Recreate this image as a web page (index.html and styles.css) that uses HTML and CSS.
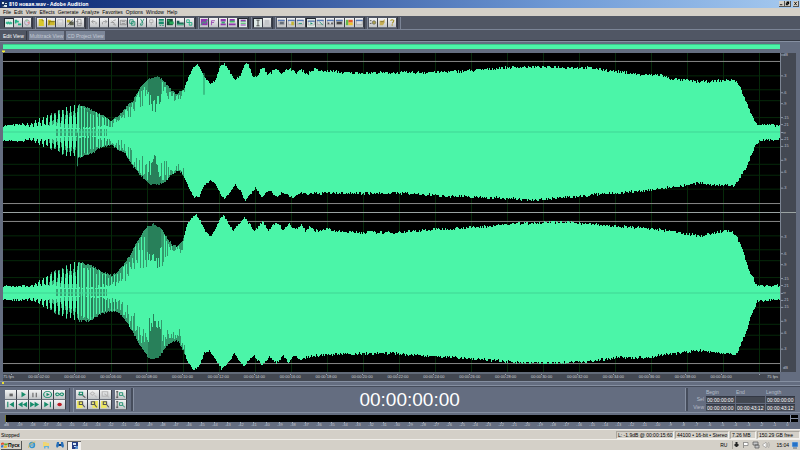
FILE: index.html
```
<!DOCTYPE html>
<html lang="en">
<head>
<meta charset="utf-8">
<title>810 новая.wav - Adobe Audition</title>
<link rel="stylesheet" href="styles.css">
</head>
<body>
<header class="titlebar">
  <svg class="app-icon" viewBox="0 0 7 7"><rect width="7" height="7" fill="#16315f"/><path d="M1 1h2v2H1zM4 2h2v1H4zM1 5h2V4h3v2H4" fill="#d6e4ea"/></svg>
  <h1>810 новая.wav - Adobe Audition</h1>
  <div class="window-buttons">
    <button aria-label="Minimize"><svg viewBox="0 0 6 6"><path d="M1 4h3v1H1z"/></svg></button>
    <button aria-label="Restore"><svg viewBox="0 0 6 6"><path d="M2 .5h3v3H4v1.500H1V2h1zM2 3v1h1V3z" fill-rule="evenodd"/></svg></button>
    <button class="close" aria-label="Close"><svg viewBox="0 0 6 6"><path d="M1.500 1l3 4M4.500 1l-3 4" stroke="#000"/></svg></button>
  </div>
</header>
<nav class="menu">
  <button>File</button><button>Edit</button><button>View</button><button>Effects</button><button>Generate</button><button>Analyze</button><button>Favorites</button><button>Options</button><button>Window</button><button>Help</button>
</nav>
<div class="toolbar" id="toolbar"></div>
<div class="tabs">
  <button class="tab active">Edit View</button><button class="tab">Multitrack View</button><button class="tab">CD Project View</button>
</div>
<main class="editor">
  <div class="overview"></div>
  <svg class="cue" viewBox="0 0 4 3"><path d="M0 0h4v1L2 3 0 1z" fill="#f4ec30"/></svg>
  <svg class="wave" id="wave" viewBox="0 0 777 321" preserveAspectRatio="none"></svg>
  <svg class="levels" id="levels"></svg>
  <div class="timeline" id="timeline"></div>
  <div class="scrollstrip"><i></i></div>
</main>
<section class="controls">
  <div class="pad transport" id="transport"></div>
  <div class="pad zoomer" id="zoomer"></div>
  <div class="pad vzoom" id="vzoom"></div>
  <output class="clock">00:00:00:00</output>
  <table class="selection">
    <tr><td></td><th>Begin</th><th>End</th><th>Length</th></tr>
    <tr><th>Sel</th><td><input aria-label="Selection begin" value="00:00:00:00"></td><td><input aria-label="Selection end" value=""></td><td><input aria-label="Selection length" value="00:00:00:00"></td></tr>
    <tr><th>View</th><td><input aria-label="View begin" value="00:00:00:00"></td><td><input aria-label="View end" value="00:00:43:12"></td><td><input aria-label="View length" value="00:00:43:12"></td></tr>
  </table>
</section>
<section class="meter">
  <div class="meter-bar"><i></i></div>
  <div class="meter-scale" id="meter"></div>
</section>
<footer class="status">
  <span class="state">Stopped</span><span class="cell peak">L: -1.9dB @ 00:00:15:60</span><span class="cell format">44100 • 16-bit • Stereo</span><span class="cell size">7.26 MB</span><span class="cell free">150.29 GB free</span>
</footer>
<div class="taskbar">
  <button class="start"><svg viewBox="0 0 8 8"><path d="M0 2q2-1.500 3.500-.4L3 4Q1.500 3 0 4z" fill="#e2502e"/><path d="M4 1.800q2 1.200 4-.1L7.300 4Q5.500 5 3.600 4z" fill="#5ba83c"/><path d="M0 4.600q1.500-1 3-.1L2.500 7Q1 6 0 7z" fill="#3a76c8"/><path d="M3.500 4.700Q5.500 5.700 7.200 4.600L6.600 7Q5 8 3 7z" fill="#f0bd30"/></svg>Пуск</button>
  <button class="task" aria-label="Internet Explorer"><svg viewBox="0 0 8 8"><circle cx="4" cy="4" r="2.500" fill="none" stroke="#3193cf" stroke-width="1.400"/><path d="M2 4h4.500" stroke="#3193cf"/><path d="M.4 6.800Q1 2 7.400.8" fill="none" stroke="#d9b74a" stroke-width=".8"/></svg></button>
  <button class="task" aria-label="Explorer"><svg viewBox="0 0 8 8"><path d="M1 1h3l1 1h2v4H1z" fill="#f0d674"/><path d="M2 5h5v2.500H5.500V6h-2v1.500H2z" fill="#66b1dc"/></svg></button>
  <button class="task" aria-label="Messenger"><svg viewBox="0 0 8 8"><path d="M1 1h2v2h2V1h2l1 4-1 2-2-2H3L1 7 0 5z" fill="#276fb9"/><path d="M3 3h2v2H3z" fill="#173b6c"/></svg></button>
  <button class="task pressed" aria-label="Adobe Audition"><svg viewBox="0 0 8 8"><path d="M1 0h6v7H1z" fill="#243d84"/><path d="M2 1h3v2H2zM3 4h3v1H3z" fill="#d6e7f7"/><path d="M5 4h2v3H4z" fill="#5890cf"/></svg></button>
  <div class="tray">
    <span class="lang">RU</span>
    <svg class="person" viewBox="0 0 6 8"><path d="M2 1h2v2h1v2H1V3h1zM2 5h2v1H2z" fill="#252525"/></svg>
    <svg viewBox="0 0 8 8"><path d="M1.500 1v6M2 1.500h4v3H2" fill="#fff" stroke="#777" stroke-width=".7"/></svg>
    <svg viewBox="0 0 8 8"><path d="M1 1h5v3H1zM3 4h4v3H3z" fill="#c4c5c7" stroke="#555" stroke-width=".7"/></svg>
    <svg viewBox="0 0 8 8"><path d="M1 3h1l2-2v6L2 5H1z" fill="#fff" stroke="#888" stroke-width=".5"/><path d="M5 2q2 2 0 4M6.500 1q2 3 0 6" fill="none" stroke="#999" stroke-width=".6"/></svg>
    <time>15:04</time>
    <svg viewBox="0 0 8 8"><path d="M1 1h6v5H1z" fill="#2472c8" stroke="#b8d6ee" stroke-width=".5"/><path d="M2 7h4" stroke="#345" stroke-width=".7"/></svg>
  </div>
</div>
<script src="app.js"></script>
</body>
</html>
```
FILE: styles.css
```
* { box-sizing: border-box; }
html, body { height: 100%; }
body {
  margin: 0;
  display: flex;
  flex-direction: column;
  overflow: hidden;
  background: #646d80;
  color: #000;
  font: 5px/6px "Liberation Sans", sans-serif;
}
button, input { font: inherit; color: inherit; margin: 0; padding: 0; border: 0; background: none; }
svg { display: block; }

.titlebar {
  flex: 0 0 8px;
  display: flex;
  align-items: center;
  gap: 1px;
  padding: 0 1px;
  background: linear-gradient(90deg, #0b2973, #2b4b94 30%, #6f9ad6 70%, #a6caf0);
  color: #fff;
}
.app-icon { width: 7px; height: 7px; }
.titlebar h1 { margin: 0; font: bold 5px/7px "Noto Sans", sans-serif; }
.window-buttons { margin-left: auto; display: flex; }
.window-buttons button { width: 6px; height: 6px; background: #d4d0c8; border-right: 1px solid #555; border-bottom: 1px solid #555; }
.window-buttons .close { margin-left: 2px; }
.window-buttons svg { width: 5px; height: 5px; }

.menu { flex: 0 0 8px; display: flex; gap: 3px; padding: 0 3px; background: #d4d0c8; }
.menu button { line-height: 8px; }

.toolbar {
  flex: 0 0 14px;
  display: flex;
  align-items: center;
  gap: 5px;
  padding-left: 4px;
  background: #505664;
  border-bottom: 1px solid #7b8496;
}
.group { position: relative; display: flex; height: 10px; }
.group::after { content: ""; position: absolute; right: -4px; top: -1px; bottom: -1px; width: 2px; border-left: 1px solid #333844; border-right: 1px solid #7b8496; }
.g2 { width: 19px; } .g3 { width: 28px; } .g5 { width: 48px; } .g9 { width: 87px; } .g11 { width: 105px; }
.tool {
  flex: 1;
  min-width: 0;
  background: linear-gradient(#f2f3f3, #c2c5c8);
  border-right: 1px solid #3c404a;
  border-bottom: 1px solid #6c727c;
}
.tool svg { width: 100%; height: 100%; }
.tool.on { background: #dfeae7; border-top: 1px solid #22262e; border-left: 1px solid #22262e; }

.tabs { flex: 0 0 10px; display: flex; gap: 2px; padding: 1px 1px 0; background: #505664; }
.tab { height: 9px; padding: 0 1px; background: #7c8698; color: #c4cad5; line-height: 8px; }
.tab.active { padding: 0 2px; background: #505664; color: #fff; border-right: 1px solid #343944; }

.editor {
  flex: 1;
  min-height: 0;
  display: grid;
  grid-template-columns: minmax(0, 1fr) 16px;
  grid-template-rows: 5px 4px minmax(0, 1fr) 9px 5px;
  padding: 3px 4px 0 3px;
  background: #646d80;
  border-top: 1px solid #343944;
  box-shadow: inset 0 1px #858fa1;
}
.overview { background: #4bf5a8; border-top: 1px solid #3bc98b; }
.cue { grid-column: 1; grid-row: 2; width: 3px; height: 3px; align-self: end; margin-left: -1px; }
.wave { grid-column: 1; grid-row: 3; width: 100%; height: 100%; background: #000; }
.levels { grid-column: 2; grid-row: 3; width: 100%; height: 100%; background: #434852; border-left: 1px solid #7c8593; }
.levels text { font-size: 4px; fill: #b9bec8; }
.timeline { grid-column: 1; grid-row: 4; display: flex; background: #434852; border-top: 2px solid #616a78; color: #d3d6da; font-size: 4px; line-height: 6px; white-space: nowrap; }
.timeline span { flex: 36 0 0; text-align: center; background: linear-gradient(#9aa2ae, #9aa2ae) center top / 1px 1px no-repeat; }
.timeline .first { flex: 18 0 0; text-align: left; }
.timeline .last { flex: 39 0 0; text-align: right; padding-right: 2px; }
.scrollstrip { grid-column: 1 / 3; border-bottom: 1px solid #858fa1; border-top: 1px solid #858fa1; margin: 0 -4px 0 -3px; }
.scrollstrip i { display: block; width: 2px; height: 2px; margin-left: 2px; background: #e9df31; }

.controls {
  flex: 0 0 26px;
  display: flex;
  align-items: center;
  padding: 0 4px 0 5px;
  background: #646d80;
  border-top: 1px solid #454c5b;
}
.pad { display: grid; grid-auto-rows: 10px; background: #3c404a; }
.transport { width: 61px; grid-template-columns: repeat(5, 1fr); }
.zoomer { width: 36px; grid-template-columns: repeat(3, 1fr); margin-left: 10px; position: relative; }
.zoomer::before { content: ""; position: absolute; left: -7px; top: -2px; bottom: -2px; width: 3px; border-left: 1px solid #464d5c; border-right: 1px solid #858fa1; }
.vzoom { width: 12px; margin-left: 3px; }
.clock {
  flex: 1;
  align-self: stretch;
  margin: 1px 4px 1px 4px;
  border-left: 2px solid #464d5c;
  border-right: 2px solid #464d5c;
  box-shadow: inset 1px 0 #858fa1, inset -1px 0 #858fa1;
  color: #fff;
  font-size: 19px;
  line-height: 23px;
  text-align: center;
}
.selection { border-spacing: 1px; color: #d8dbe0; line-height: 6px; }
.selection td, .selection th { padding: 0; font-weight: normal; text-align: left; height: 6px; }
.selection th:first-child { text-align: right; padding-right: 1px; }
.selection th { color: #b6bdc9; }
.selection input { display: block; width: 29px; height: 7px; padding-left: 1px; background: #434852; border-top: 1px solid #333844; color: #fff; line-height: 6px; }

.meter { flex: 0 0 17px; border-top: 1px solid #858fa1; background: #646d80; }
.meter-bar { display: flex; justify-content: flex-end; height: 7px; margin: 2px 2px 0 5px; background: #000; border-left: 1px solid #77762d; }
.meter-bar i { width: 8px; border-left: 1px solid #858fa1; background: linear-gradient(#858fa1, #858fa1) center / 100% 1px no-repeat; }
.meter-scale { display: flex; padding-right: 6px; color: #c3c8d0; font-size: 4px; line-height: 6px; }
.meter-scale span { flex: 1 0 0; text-align: center; background: linear-gradient(#aeb5c0, #aeb5c0) center top / 1px 1px no-repeat; }

.status { flex: 0 0 10px; display: flex; align-items: center; gap: 1px; background: #d4d0c8; border-top: 1px solid #f4f2ee; white-space: nowrap; }
.state { flex: 1; padding-left: 1px; }
.cell { height: 8px; padding-left: 1px; line-height: 7px; border: 1px solid #aaa69e; border-right-color: #f4f2ee; border-bottom-color: #f4f2ee; }
.peak { width: 58px; } .format { width: 54px; } .size { width: 26px; } .free { width: 43px; }

.taskbar { flex: 0 0 11px; display: flex; align-items: center; padding: 0 1px; background: #d4d0c8; border-top: 1px solid #f1efea; }
.taskbar svg { width: 8px; height: 8px; }
.start { display: flex; align-items: center; width: 21px; height: 9px; font-weight: bold; border-right: 1px solid #555; border-bottom: 1px solid #555; margin-right: 3px; white-space: nowrap; }
.start svg { flex: none; width: 7px; }
.task { display: grid; place-items: center; width: 14px; height: 9px; }
.task.pressed { background: #f2f0ee; border-top: 1px solid #666; border-left: 1px solid #666; }
.tray { margin-left: auto; display: flex; align-items: center; gap: 2px; }
.lang { margin-right: 3px; }
.tray .person { border-left: 1px solid #aaa69e; }
.tray time { margin-left: 4px; }
```
FILE: app.js
```
// Icon artwork on a 10 x 10 grid
const p = (d, fill) => `<path d="${d}" fill="${fill}"/>`;
const l = (d, stroke, w = 1) => `<path d="${d}" fill="none" stroke="${stroke}" stroke-width="${w}"/>`;
const G = '#168c6a', K = '#555', P = '#8f37ad';
const win = l('M1.500 2.500h7v5h-7z', '#aaa') + p('M1 2h8v1.500H1z', '#5577b5');
const mag = l('M6 6l2.500 2.500', K) + l('M3 2.500h3v3H3z', G);
const icons = {
  wave: p('M1 4h1V3h1v1h1V3h1v1h1V3h1v1h2v2H8v1H7V6H6v1H5V6H4v1H3V6H1z', '#20b386'),
  multi: p('M1 2h3v1h2v2H3v1H1zM5 6h4v2H5z', '#20b386'),
  cd: `<circle cx="5" cy="5" r="3" fill="#d8cfe8" stroke="#999"/>` + p('M5 5l3-1v3z', '#e68d8d') + p('M5 5L3 2h3z', '#8fcf9b'),
  fresh: p('M2 1h4l2 2v6H2z', '#d8c82b') + l('M6 1v2h2', '#83780f', .7),
  open: p('M1 2h3l1 1h4v5H1z', '#cdb82c') + l('M2 4h7M2 8l1-4', '#70650d', .8),
  save: l('M2 2h6v6H2z', '#bbb') + p('M3 5h4v3H3z', '#ccc'),
  saveas: p('M1 2h4v3H1z', '#c8b739') + p('M4 4h5v4H4z', '#5c604e') + l('M2 8l6-6', '#222', .7),
  page: l('M3 1.500h4v7H3zM1 4h3M4 6h4', '#888', .8),
  undo: l('M2 4h4q2 1 1 3M4 2L2 4l2 2', '#888', .8),
  redo: l('M8 4H4Q2 5 3 7M6 2l2 2-2 2', '#888', .8),
  cut0: l('M2 5h4M5 3l3-1M5 7l3 1M3 3l4 4', '#888', .8),
  boxes: l('M1.500 2.500h7v5h-7zM3 4h4M3 6h4', '#777', .8),
  copy: l('M2 2h4v4H2zM4 4h4v4H4z', G, .9),
  cut: l('M3 1l3 5M7 1L4 6M3 6v2h2V6', G, .9),
  paste: l('M3 2h4v3H3zM5 5v3', '#aaa'),
  trim: p('M2 1h6v2H2zM2 4h6v3H2zM3 8h2v1H3zM6 8h2v1H6z', G),
  dark: p('M1 1h7v7H1z', '#17533a') + p('M4 4h5v3H4zM2 2h2v2H2z', '#24a657'),
  chart: p('M1 3h3v2h5v3H1z', '#145d4c') + l('M1 7h8', '#5cd49c'),
  link: l('M2 2h3v3H2zM5 5h3v3H5z', '#1cae81'),
  p1: p('M1 1h8v7H1z', P) + l('M1 8l3-4 2 2 3-4', '#2ac266'),
  p2: l('M3 8V3h4M3 5h3', P, .9),
  p3: p('M2 1h6v3H2zM2 6h6v2H2z', P) + p('M3 4h4v2H3z', '#35a870'),
  p4: p('M2 1h6v3H2zM1 6h8v2H1z', P) + p('M2 3h6v2H2z', '#42bb62'),
  p5: p('M2 1h6v2H2zM2 7h6v1H2z', P) + p('M2 3h6v1H2zM2 5h6v1H2z', '#42bb62'),
  text: l('M3 1.500h4M5 1.500v7M3 8.500h4', '#333'),
  blank: p('M2 2h6v6H2z', '#c3c6c9'),
  w1: win + p('M3 4h5v3H3z', '#666e78'), w2: win + p('M5 4h3v4H5z', '#c2b532'),
  w3: win + l('M3 6h4', G), w4: win + p('M4 4l3 1.500L4 7z', G), w5: win + l('M4 4l4 4', G),
  w6: win + p('M2 5h2v2H2zM6 5h2v2H6z', '#555'), w7: win + p('M2 4h6v3H2z', '#444'),
  w8: p('M1 2h3v6H1z', '#64b84d') + p('M4 2h5v3H4z', '#e35c31') + p('M4 5h5v3H4z', '#efc22c'), w9: win,
  opt: l('M1 3h2M1 6h2', '#444') + `<circle cx="6" cy="5" r="2" fill="#aaa14d" stroke="#555" stroke-width=".7"/>`,
  script: p('M2 3h4l2-2v4L6 8H2z', '#c5ae55') + l('M3 4h4', '#6d5f2a', .7),
  help: l('M3 3q2-2 4 0Q6 5 5 6M5 7v1.500', '#a69323', 1.2),
  stop: p('M4 4h3v3H4z', '#666'), play: p('M4 2l4 3-4 3z', G), pause: p('M3 3h1v5H3zM6 3h1v5H6z', '#666'),
  loop: `<circle cx="5" cy="5" r="3.500" fill="none" stroke="${G}"/>` + p('M4 3l3 2-3 2z', G),
  inf: l('M5 5Q3 2 1.500 4.500 2 8 5 5q2-3 3.500-.5Q8 8 5 5', G, 1.1),
  first: p('M2 2h1v6H2zM8 2v6L4 5z', G), rew: p('M5 2v6L1 5zM9 2v6L5 5z', G),
  fwd: p('M1 2v6l4-3zM5 2v6l4-3z', G), last: p('M7 2h1v6H7zM2 2v6l4-3z', G),
  rec: '<circle cx="5" cy="5" r="2" fill="#bd1d25"/>',
  zin: l('M2 5h4', K) + mag, zout: l('M2 4l2-2 2 2-2 2zM6 6l2 2', '#bbb'), zfull: l('M2 2h5v5H2zM4 4l4 4', '#b5b5b5'),
  zy: p('M1 1h5v8H1z', '#ede65f') + l('M3 2h3v3H3zM6 5l2 3', '#555'),
  zy2: p('M4 1h5v8H4z', '#ede65f') + l('M3 2h3v3H3zM6 5l2 3', '#555'),
  vz: l('M2 1v8M1 2h2M1 8h2', '#444', .8) + l('M4 3h3v3H4zM7 6l2 2', G, .9)
};

const button = (name, on) =>
  `<button class="tool${on ? ' on' : ''}" aria-label="${name}"><svg viewBox="0 0 10 10" preserveAspectRatio="none">${icons[name]}</svg></button>`;
const byId = id => document.getElementById(id);
const pressed = ['wave', 'p5', 'w4', 'text'];

byId('toolbar').innerHTML = [
  'wave multi cd', 'fresh open save saveas page',
  'undo redo cut0 boxes copy cut paste trim dark chart link',
  'p1 p2 p3 p4 p5', 'text blank', 'w1 w2 w3 w4 w5 w6 w7 w8 w9', 'opt script help'
].map(row => {
  const names = row.split(' ');
  return `<div class="group g${names.length}">${names.map(n => button(n, pressed.includes(n))).join('')}</div>`;
}).join('');

const pad = (id, row) => { byId(id).innerHTML = row.split(' ').map(n => button(n)).join(''); };
pad('transport', 'stop play pause loop inf first rew fwd last rec');
pad('zoomer', 'zin zout zfull zy zy2 zy');
pad('vzoom', 'vz vz');

// Time and meter rulers
const two = n => String(n).padStart(2, '0');
byId('timeline').innerHTML = '<span class="first">75 fps</span>' +
  Array.from({ length: 20 }, (_, i) => `<span>00:00:${two(i * 2 + 2)}:00</span>`).join('') +
  '<span class="last">75 fps</span>';
byId('meter').innerHTML = Array.from({ length: 61 }, (_, i) =>
  `<span>${i === 0 ? 'dB' : i - 60}</span>`).join('');

// Peak envelopes: x, y pairs in view units for each channel edge
const channels = [
  { mid: 80,
    top: '0 73 17 72 27 71 37 66 50 60 57 57 62 55 75 52 82 54 90 58 97 62 108 68 115 63 122 55 130 47 137 35 145 26 155 23 162 30 169 39 174 41 180 37 185 25 190 14 194 12 197 16 202 25 207 31 212 28 217 13 221 11 225 17 232 27 237 22 242 10 245 11 250 25 254 23 259 14 265 22 273 15 279 21 286 15 292 20 298 17 304 21 312 16 319 19 327 18 340 20 397 20 447 19 477 17 497 15 517 14 547 14 587 15 617 19 637 22 657 22 667 26 697 29 730 27 735 31 742 47 747 60 754 72 777 73',
    bottom: '0 88 27 89 37 93 50 97 62 103 77 105 90 100 97 95 108 93 115 97 122 102 130 115 137 123 147 133 157 132 164 127 169 122 175 118 180 123 185 135 191 146 196 144 201 133 207 128 212 131 217 142 221 147 227 139 232 133 237 139 242 149 247 142 252 136 258 145 266 138 274 145 280 140 287 146 297 141 307 142 317 141 397 141 447 144 497 146 527 148 557 146 597 142 637 139 667 135 697 131 730 134 737 125 742 117 747 105 752 93 756 88 777 87' },
  { mid: 241,
    top: '0 235 27 234 37 228 47 222 57 217 67 212 74 210 87 214 97 219 109 224 115 219 122 211 130 197 137 184 144 175 150 172 157 176 164 187 169 193 174 194 179 189 184 172 190 164 193 163 197 169 202 179 207 185 212 177 217 166 220 164 225 171 230 179 237 170 241 166 246 172 251 179 259 169 265 178 273 170 280 178 286 171 292 178 298 173 302 179 307 174 312 179 322 177 337 180 387 181 427 178 477 175 507 172 547 170 577 171 607 174 637 176 657 178 697 184 717 180 727 179 732 183 737 193 742 207 747 222 754 234 777 234',
    bottom: '0 248 27 249 37 254 47 259 57 265 72 269 85 270 97 263 107 260 115 261 122 269 130 282 137 295 147 309 155 306 162 297 169 290 175 290 180 300 185 313 191 319 196 315 201 302 206 299 212 308 218 318 225 311 231 302 240 315 250 304 258 314 266 305 273 312 280 305 285 311 291 304 297 309 307 305 322 304 342 303 387 302 427 305 477 308 517 312 557 312 587 310 617 306 642 307 657 304 697 299 730 304 734 301 742 282 747 267 754 250 777 248' }
];
const core = [70, 5, 90, 5, 108, 9, 118, 12, 125, 22, 135, 35, 145, 42, 152, 28, 159, 44, 167, 48, 176, 54, 182, 80];
function sample(points, x) {
  for (let i = 2; i < points.length; i += 2) {
    if (x <= points[i]) {
      const x0 = points[i - 2], y0 = points[i - 1];
      return y0 + (points[i + 1] - y0) * (x - x0) / (points[i] - x0);
    }
  }
  return points[points.length - 1];
}
let seed = 7;
const rnd = () => (seed = (seed * 16807) % 2147483647) / 2147483647;

let bright = '', dim = '', deep = '', hollow = '';
const bar = (x, a, b) => `M${x} ${a.toFixed(1)}h1V${b.toFixed(1)}h-1z`;
for (const ch of channels) {
  const top = ch.top.split(' ').map(Number), bottom = ch.bottom.split(' ').map(Number);
  for (let x = 0; x < 777; x++) {
    const n = x > 250 ? 3 : 2;
    const a = ch.mid - sample(top, x) + (rnd() - .5) * n;
    const b = sample(bottom, x) - ch.mid + (rnd() - .5) * n;
    const put = (u, v) => bar(x, ch.mid - u, ch.mid + v);
    if (x < 22 || x > 181) { bright += put(a, b); continue; }
    if (x < 76) {
      // Separate swings with dark gaps between them
      const t = Math.pow((1 + Math.cos((x - 28) * Math.PI * 2 / 3.9)) / 2, .8);
      const base = x < 45 ? 6 : 4;
      if (x > 45) dim += put(Math.min(a, base + (a - base) * t + 4), Math.min(b, base + (b - base) * t + 4));
      bright += put(base + (a - base) * t, base + (b - base) * t);
      if (x > 52 && t < .6) hollow += put(4, 4);
      continue;
    }
    if (x > 144 && x < 158) deep += put(a, b); else dim += put(a, b);
    const c = sample(core, x);
    const full = x < 144 ? x % 3 === 0 || rnd() < .1 : x > 158 && rnd() < .55;
    const u = full ? a * (.8 + rnd() * .2) : Math.min(a, c * (.6 + rnd() * .6));
    const v = full ? b * (.8 + rnd() * .2) : Math.min(b, c * (.6 + rnd() * .6));
    bright += put(u, v);
    if (!full && x < 104) hollow += put(4, 4);
    if (!full && x < 118 && rnd() < .5) deep += put(a * .9, b * .9);
  }
}
const offsets = [15, 29, 40, 57];
let grid = '';
for (const ch of channels)
  for (const o of offsets) grid += `M0 ${ch.mid - (72 - o)}h777M0 ${ch.mid + (72 - o)}h777`;
for (let x = 36; x < 777; x += 36) grid += `M${x}.5 0v321`;
byId('wave').innerHTML =
  `<path d="${grid}" stroke="#06290a" fill="none"/>` +
  '<path d="M0 8.500h777M0 151.500h777M0 169.500h777M0 312.500h777" stroke="#8a8a8a"/>' +
  `<g shape-rendering="crispEdges">${p(dim, '#349a6d')}${p(deep, '#28805a')}${p(bright, '#4bf5a8')}${p(hollow, '#36a574')}</g>` +
  p('M74 80h1v34h-1zM200.500 20h1v22h-1z', '#2a9164') +
  '<path d="M0 79.500h777M0 241.500h777" stroke="#40d596"/>' +
  '<path d="M0 160.500h777" stroke="#9aa3a3"/>';

// Decibel scale beside each channel
const marks = [['dB', 2], ['-3', 23], ['-6', 40], ['-9', 51], ['-15', 65], ['-21', 72], ['∞', 80], ['-21', 87], ['-15', 94], ['-9', 108], ['-6', 120], ['-3', 136]];
let scale = '';
for (const shift of [0, 162])
  for (const [label, y] of marks) {
    if (shift && label === 'dB') continue;
    const at = (y + shift) / 3.21;
    scale += `<line x1="0" x2="2" y1="${at}%" y2="${at}%" stroke="#8d96a3"/><text x="2" y="${at}%" dy="1">${label}</text>`;
  }
byId('levels').innerHTML = scale + '<text x="2" y="99%">dB</text><line x1="0" x2="100%" y1="50%" y2="50%" stroke="#9aa3a3"/>';
```
